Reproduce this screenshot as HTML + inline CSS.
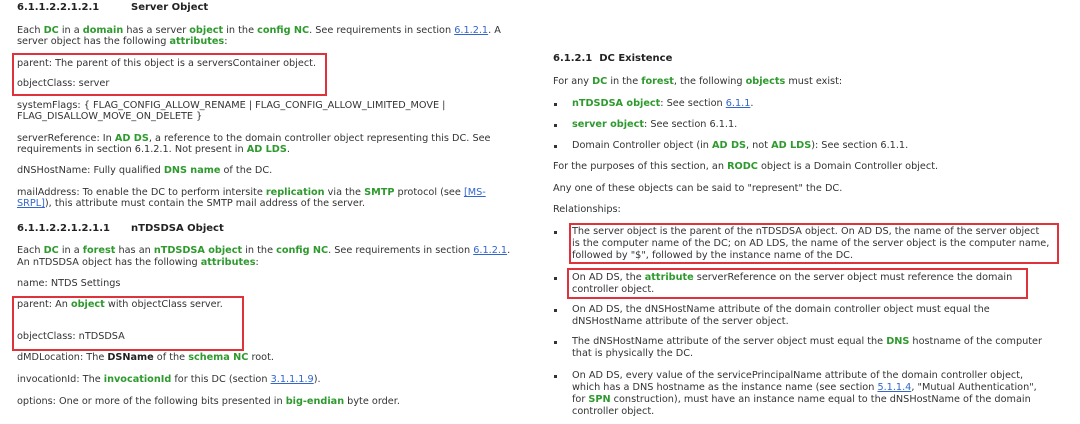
<!DOCTYPE html>
<html><head><meta charset="utf-8"><style>
body{margin:0;width:1080px;height:424px;background:#fff;position:relative;overflow:hidden;font-family:"DejaVu Sans","Liberation Sans",sans-serif;font-size:9.7px;color:#333}
.l{position:absolute;white-space:nowrap;line-height:12px}
.g{color:#2e9a2e;font-weight:bold}
.a{color:#3366cc;text-decoration:underline}
.h{font-weight:bold;font-size:10px;color:#222}
.bx{position:absolute;border:2px solid #e0323a}
.b{position:absolute;width:3px;height:3px;background:#333}
</style></head><body>
<div class="l h" style="left:17px;top:2px">6.1.1.2.2.1.2.1<span style="position:absolute;left:114px">Server Object</span></div>
<div class="l" style="left:17px;top:25px">Each <span class="g">DC</span> in a <span class="g">domain</span> has a server <span class="g">object</span> in the <span class="g">config NC</span>. See requirements in section <span class="a">6.1.2.1</span>. A</div>
<div class="l" style="left:17px;top:36px">server object has the following <span class="g">attributes</span>:</div>
<div class="l" style="left:17px;top:58px">parent: The parent of this object is a serversContainer object.</div>
<div class="l" style="left:17px;top:78px">objectClass: server</div>
<div class="bx" style="left:12px;top:53px;width:311px;height:39px"></div>
<div class="l" style="left:17px;top:100px">systemFlags: { FLAG_CONFIG_ALLOW_RENAME | FLAG_CONFIG_ALLOW_LIMITED_MOVE |</div>
<div class="l" style="left:17px;top:111px">FLAG_DISALLOW_MOVE_ON_DELETE }</div>
<div class="l" style="left:17px;top:133px">serverReference: In <span class="g">AD DS</span>, a reference to the domain controller object representing this DC. See</div>
<div class="l" style="left:17px;top:144px">requirements in section 6.1.2.1. Not present in <span class="g">AD LDS</span>.</div>
<div class="l" style="left:17px;top:165px">dNSHostName: Fully qualified <span class="g">DNS name</span> of the DC.</div>
<div class="l" style="left:17px;top:187px">mailAddress: To enable the DC to perform intersite <span class="g">replication</span> via the <span class="g">SMTP</span> protocol (see <span class="a">[MS-</span></div>
<div class="l" style="left:17px;top:198px"><span class="a">SRPL]</span>), this attribute must contain the SMTP mail address of the server.</div>
<div class="l h" style="left:17px;top:223px">6.1.1.2.2.1.2.1.1<span style="position:absolute;left:114px">nTDSDSA Object</span></div>
<div class="l" style="left:17px;top:245px">Each <span class="g">DC</span> in a <span class="g">forest</span> has an <span class="g">nTDSDSA object</span> in the <span class="g">config NC</span>. See requirements in section <span class="a">6.1.2.1</span>.</div>
<div class="l" style="left:17px;top:257px">An nTDSDSA object has the following <span class="g">attributes</span>:</div>
<div class="l" style="left:17px;top:278px">name: NTDS Settings</div>
<div class="l" style="left:17px;top:299px">parent: An <span class="g">object</span> with objectClass server.</div>
<div class="l" style="left:17px;top:331px">objectClass: nTDSDSA</div>
<div class="bx" style="left:12px;top:296px;width:228px;height:51px"></div>
<div class="l" style="left:17px;top:352px">dMDLocation: The <b style="color:#222">DSName</b> of the <span class="g">schema NC</span> root.</div>
<div class="l" style="left:17px;top:374px">invocationId: The <span class="g">invocationId</span> for this DC (section <span class="a">3.1.1.1.9</span>).</div>
<div class="l" style="left:17px;top:396px">options: One or more of the following bits presented in <span class="g">big-endian</span> byte order.</div>

<div class="l" style="left:553px;top:53px;font-weight:bold;font-size:10px;color:#222">6.1.2.1&nbsp; DC Existence</div>
<div class="l" style="left:553px;top:76px">For any <span class="g">DC</span> in the <span class="g">forest</span>, the following <span class="g">objects</span> must exist:</div>
<div class="b" style="left:554px;top:103px"></div><div class="l" style="left:572px;top:98px"><span class="g">nTDSDSA object</span>: See section <span class="a">6.1.1</span>.</div>
<div class="b" style="left:554px;top:124px"></div><div class="l" style="left:572px;top:119px"><span class="g">server object</span>: See section 6.1.1.</div>
<div class="b" style="left:554px;top:145px"></div><div class="l" style="left:572px;top:140px">Domain Controller object (in <span class="g">AD DS</span>, not <span class="g">AD LDS</span>): See section 6.1.1.</div>
<div class="l" style="left:553px;top:161px">For the purposes of this section, an <span class="g">RODC</span> object is a Domain Controller object.</div>
<div class="l" style="left:553px;top:183px">Any one of these objects can be said to "represent" the DC.</div>
<div class="l" style="left:553px;top:204px">Relationships:</div>
<div class="b" style="left:554px;top:231px"></div>
<div class="l" style="left:572px;top:226px">The server object is the parent of the nTDSDSA object. On AD DS, the name of the server object</div>
<div class="l" style="left:572px;top:238px">is the computer name of the DC; on AD LDS, the name of the server object is the computer name,</div>
<div class="l" style="left:572px;top:250px">followed by "$", followed by the instance name of the DC.</div>
<div class="bx" style="left:569px;top:223px;width:486px;height:37px"></div>
<div class="b" style="left:554px;top:277px"></div>
<div class="l" style="left:572px;top:272px">On AD DS, the <span class="g">attribute</span> serverReference on the server object must reference the domain</div>
<div class="l" style="left:572px;top:284px">controller object.</div>
<div class="bx" style="left:567px;top:268px;width:457px;height:27px"></div>
<div class="b" style="left:554px;top:309px"></div>
<div class="l" style="left:572px;top:304px">On AD DS, the dNSHostName attribute of the domain controller object must equal the</div>
<div class="l" style="left:572px;top:316px">dNSHostName attribute of the server object.</div>
<div class="b" style="left:554px;top:341px"></div>
<div class="l" style="left:572px;top:336px">The dNSHostName attribute of the server object must equal the <span class="g">DNS</span> hostname of the computer</div>
<div class="l" style="left:572px;top:348px">that is physically the DC.</div>
<div class="b" style="left:554px;top:375px"></div>
<div class="l" style="left:572px;top:370px">On AD DS, every value of the servicePrincipalName attribute of the domain controller object,</div>
<div class="l" style="left:572px;top:382px">which has a DNS hostname as the instance name (see section <span class="a">5.1.1.4</span>, "Mutual Authentication",</div>
<div class="l" style="left:572px;top:394px">for <span class="g">SPN</span> construction), must have an instance name equal to the dNSHostName of the domain</div>
<div class="l" style="left:572px;top:406px">controller object.</div>
</body></html>
